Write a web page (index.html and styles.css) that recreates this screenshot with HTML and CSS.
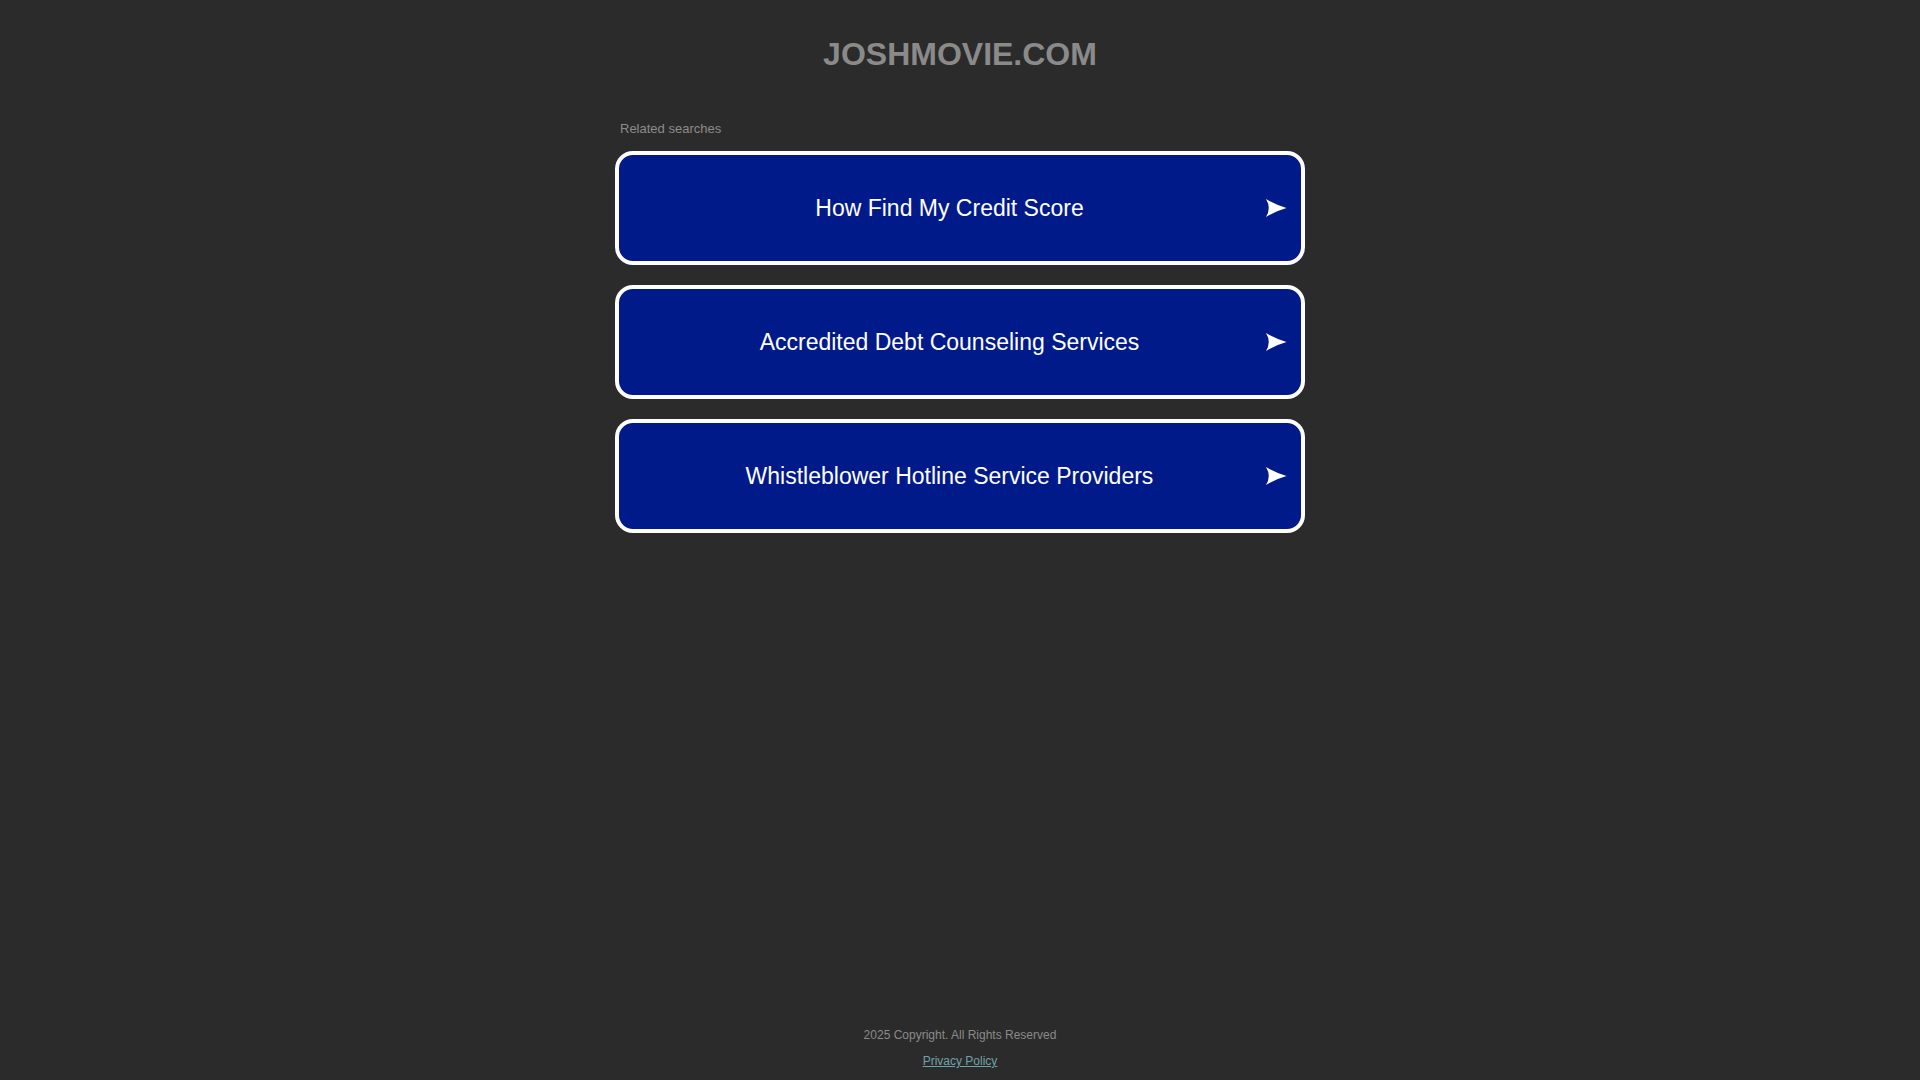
FILE: index.html
```html
<!DOCTYPE html>
<html lang="en">
<head>
<meta charset="utf-8">
<title>joshmovie.com</title>
<link rel="stylesheet" href="styles.css">
</head>
<body>
<div class="page">
  <header class="header">
    <h1 class="domain">JOSHMOVIE.COM</h1>
  </header>
  <main class="content">
    <p class="related">Related searches</p>
    <ul class="links">
      <li><a class="link" href="#"><span class="link-text">How Find My Credit Score</span><svg class="arrow" viewBox="0 0 22 20" width="22" height="20"><path d="M1 1 Q11 7 21.5 10 Q11 13 1 19 Q6.5 10 1 1 Z" fill="#fff"/></svg></a></li>
      <li><a class="link" href="#"><span class="link-text">Accredited Debt Counseling Services</span><svg class="arrow" viewBox="0 0 22 20" width="22" height="20"><path d="M1 1 Q11 7 21.5 10 Q11 13 1 19 Q6.5 10 1 1 Z" fill="#fff"/></svg></a></li>
      <li><a class="link" href="#"><span class="link-text">Whistleblower Hotline Service Providers</span><svg class="arrow" viewBox="0 0 22 20" width="22" height="20"><path d="M1 1 Q11 7 21.5 10 Q11 13 1 19 Q6.5 10 1 1 Z" fill="#fff"/></svg></a></li>
    </ul>
  </main>
  <footer class="footer">
    <p class="copyright">2025 Copyright. All Rights Reserved</p>
    <a class="privacy" href="#">Privacy Policy</a>
  </footer>
</div>
</body>
</html>
```
FILE: styles.css
```css
html, body {
  margin: 0;
  padding: 0;
  background: #2b2b2b;
}
body {
  font-family: "Liberation Sans", Arial, sans-serif;
}
.page {
  min-height: 100vh;
  display: flex;
  flex-direction: column;
  align-items: center;
}
.header {
  padding-top: 36px;
}
.domain {
  margin: 0;
  font-size: 32px;
  font-weight: bold;
  color: #8a8a8a;
  text-align: center;
}
.content {
  width: 690px;
  padding-top: 48px;
}
.related {
  margin: 0 0 15px 5px;
  font-size: 13px;
  color: #8c8c8c;
}
.links {
  list-style: none;
  margin: 0;
  padding: 0;
  display: flex;
  flex-direction: column;
  gap: 20px;
}
.link {
  display: flex;
  align-items: center;
  height: 106px;
  padding: 0 14px 0 15px;
  border: 4px solid #ffffff;
  border-radius: 18px;
  background: #011a8a;
  color: #ffffff;
  text-decoration: none;
}
.link-text {
  flex: 1;
  text-align: center;
  font-size: 23px;
}
.arrow {
  flex: none;
  display: block;
}
.footer {
  margin-top: auto;
  padding-bottom: 12px;
  text-align: center;
  display: flex;
  flex-direction: column;
  align-items: center;
}
.copyright {
  margin: 0 0 12px;
  font-size: 12px;
  color: #8a8a8a;
}
.privacy {
  font-size: 12px;
  color: #6fa2a8;
  text-decoration: underline;
}
```
